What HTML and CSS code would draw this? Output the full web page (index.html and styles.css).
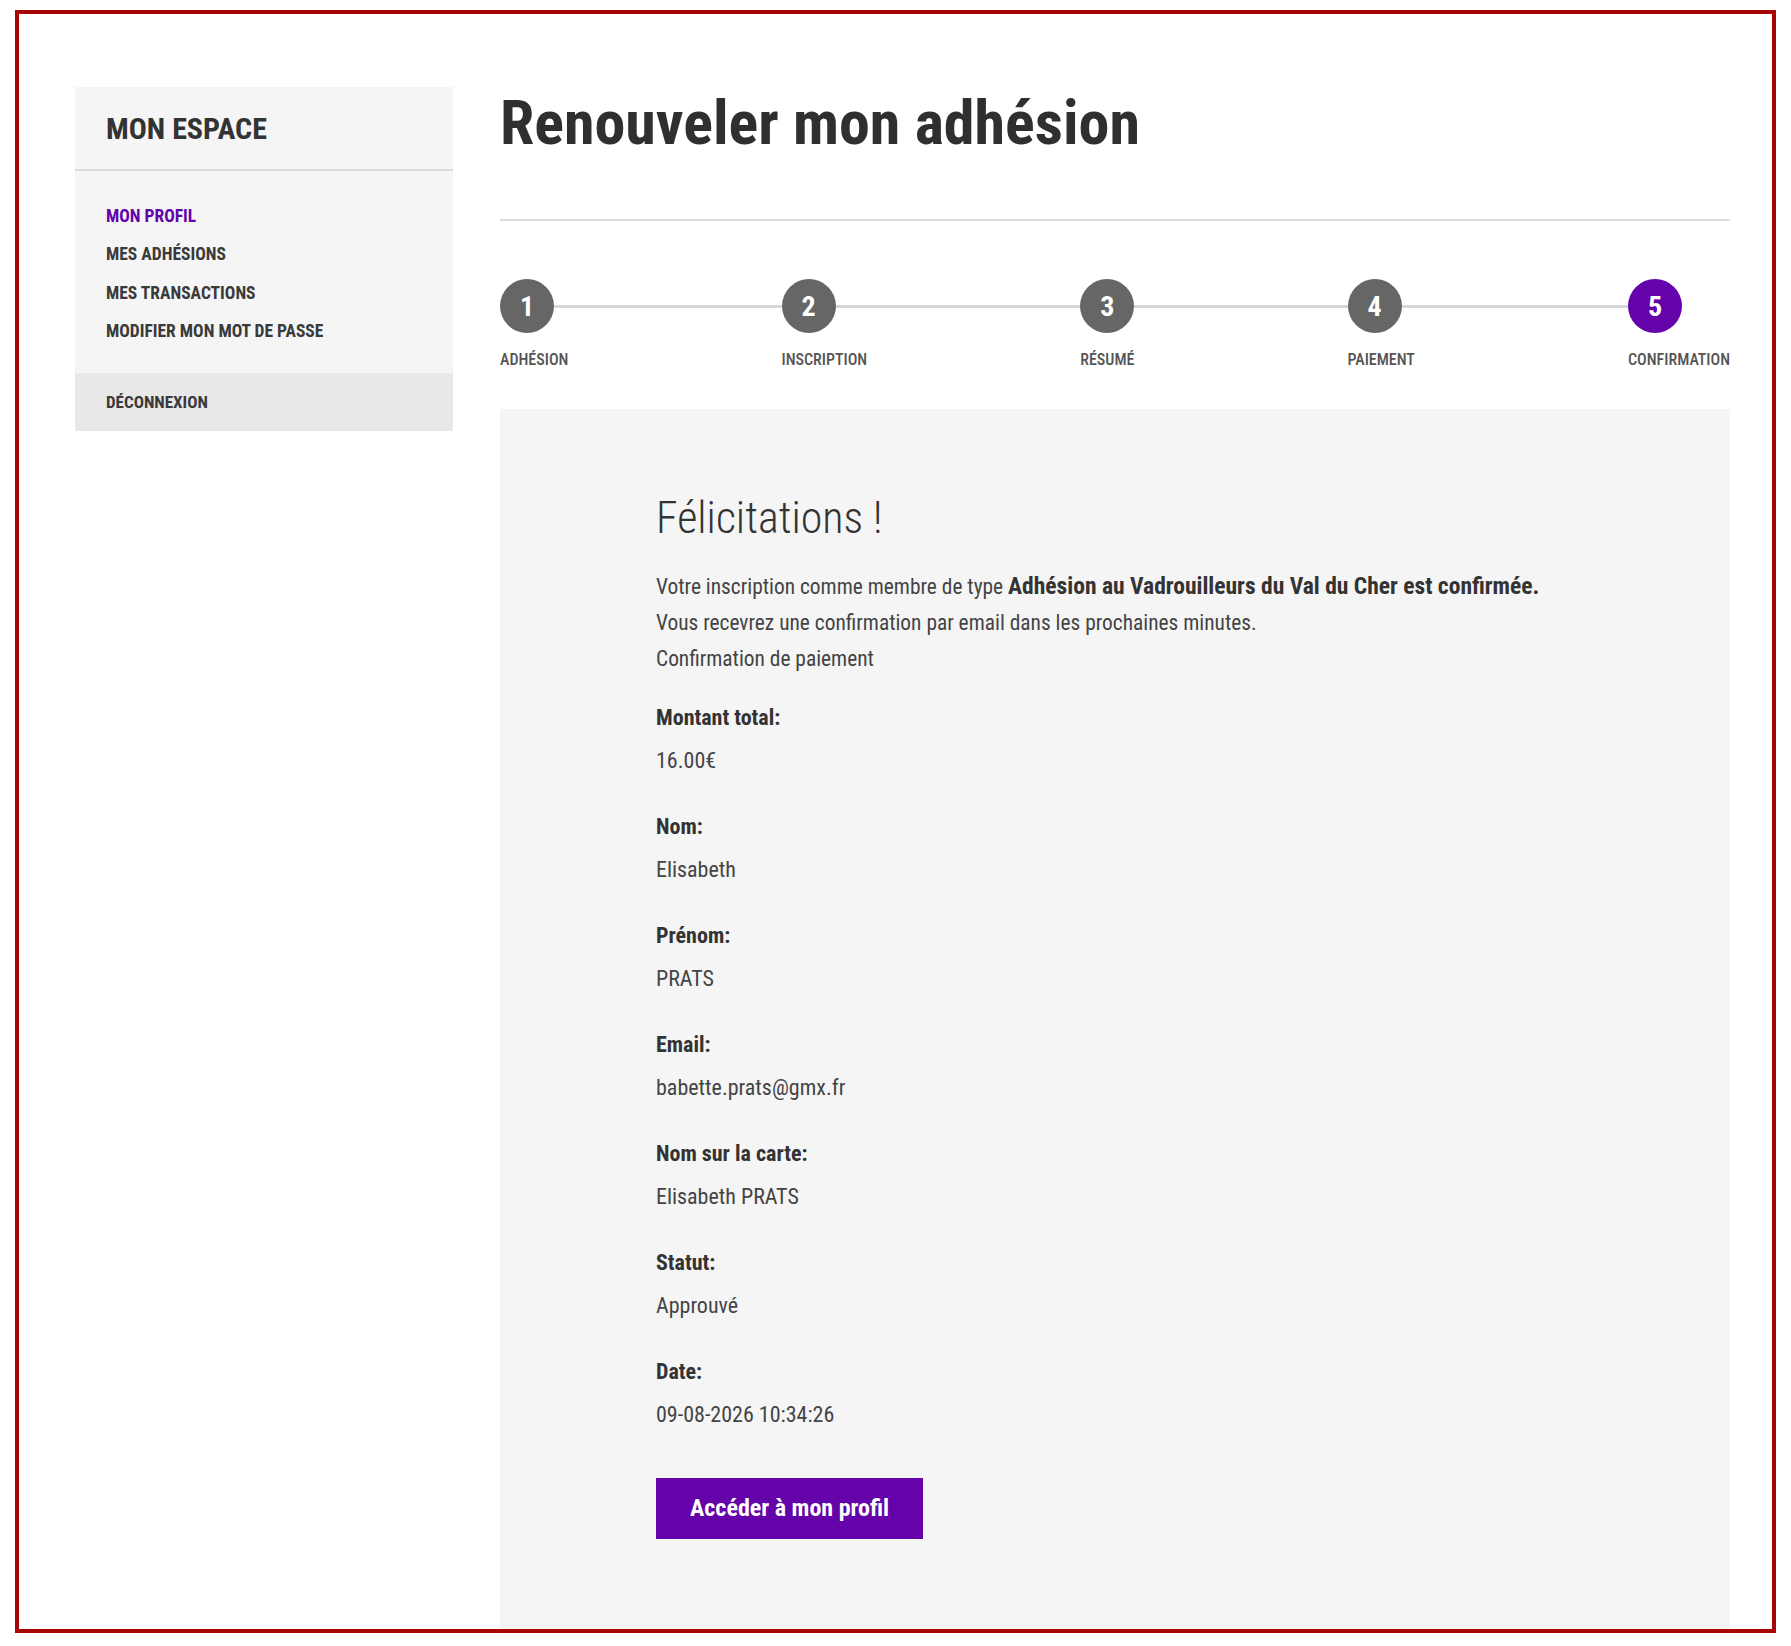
FILE: index.html
```html
<!DOCTYPE html>
<html lang="fr">
<head>
  <meta charset="UTF-8" />
  <meta name="viewport" content="width=device-width, initial-scale=1.0"/>
  <title>Renouveler mon adhésion</title>
  <link rel="stylesheet" href="styles.css">
</head>
<body>

<div class="frame">
  <div class="layout">

    <!-- Menu de l'espace membre -->
    <aside class="sidebar">
      <div class="sidebar-head">
        <h2>Mon espace</h2>
      </div>
      <nav class="sidebar-nav">
        <a href="#" class="active">Mon profil</a>
        <a href="#">Mes adhésions</a>
        <a href="#">Mes transactions</a>
        <a href="#">Modifier mon mot de passe</a>
      </nav>
      <a href="#" class="logout">Déconnexion</a>
    </aside>

    <main class="content">
      <h1>Renouveler mon adhésion</h1>
      <hr class="rule">

      <!-- Etapes du renouvellement -->
      <ol class="steps">
        <li class="step"><span class="step-num">1</span><span class="step-label">Adhésion</span></li>
        <li class="step"><span class="step-num">2</span><span class="step-label">Inscription</span></li>
        <li class="step"><span class="step-num">3</span><span class="step-label">Résumé</span></li>
        <li class="step"><span class="step-num">4</span><span class="step-label">Paiement</span></li>
        <li class="step current"><span class="step-num">5</span><span class="step-label">Confirmation</span></li>
      </ol>

      <section class="panel">
        <h3>Félicitations !</h3>
        <div class="message">
          <p>Votre inscription comme membre de type <strong>Adhésion au Vadrouilleurs du Val du Cher est confirmée.</strong></p>
          <p>Vous recevrez une confirmation par email dans les prochaines minutes.</p>
          <p>Confirmation de paiement</p>
        </div>

        <div class="details">
          <div class="field"><div class="field-label">Montant total:</div><div class="field-value">16.00€</div></div>
          <div class="field"><div class="field-label">Nom:</div><div class="field-value">Elisabeth</div></div>
          <div class="field"><div class="field-label">Prénom:</div><div class="field-value">PRATS</div></div>
          <div class="field"><div class="field-label">Email:</div><div class="field-value">babette.prats@gmx.fr</div></div>
          <div class="field"><div class="field-label">Nom sur la carte:</div><div class="field-value">Elisabeth PRATS</div></div>
          <div class="field"><div class="field-label">Statut:</div><div class="field-value">Approuvé</div></div>
          <div class="field"><div class="field-label">Date:</div><div class="field-value">09-08-2026 10:34:26</div></div>
        </div>

        <a href="#" class="btn">Accéder à mon profil</a>
      </section>
    </main>

  </div>
</div>

</body>
</html>
```
FILE: styles.css
```css
:root {
  --violet: #6303a9;
  --gris-fond: #f5f5f5;
  --gris-ligne: #dddddd;
  --texte: #333;
}

body {
  margin: 0;
  font-family: Roboto, "Open Sans", sans-serif;
  font-stretch: 75%;
  color: var(--texte);
  background: #fff;
}

a {
  text-decoration: none;
  color: inherit;
}

.frame {
  margin: 10px 15px 13px 15px;
  border: 4px solid #a80606;
}

.layout {
  display: flex;
  align-items: flex-start;
  gap: 47px;
  padding: 73px 42px 0 56px;
}

/* ---- sidebar ---- */

.sidebar {
  flex: none;
  width: 378px;
  background: var(--gris-fond);
}

.sidebar-head {
  padding: 22px 31px 20px;
  border-bottom: 2px solid var(--gris-ligne);
}

.sidebar-head h2 {
  margin: 0;
  font-size: 30px;
  line-height: 40px;
  font-weight: 700;
  text-transform: uppercase;
  color: #333;
}

.sidebar-nav {
  display: flex;
  flex-direction: column;
  padding: 26px 31px 22px;
}

.sidebar-nav a,
.logout {
  font-size: 17.5px;
  line-height: 38.4px;
  font-weight: 700;
  text-transform: uppercase;
  color: #3a3a3a;
}

.sidebar-nav a.active {
  color: var(--violet);
}

.logout {
  display: block;
  padding: 10px 31px;
  background: #e8e8e8;
  font-size: 17px;
}

/* ---- contenu ---- */

.content {
  flex: 1;
  min-width: 0;
}

.content h1 {
  margin: 5px 0 0;
  font-size: 62px;
  line-height: 62px;
  font-weight: 700;
  color: #2f2f2f;
}

.rule {
  margin: 65px 0 0;
  border: none;
  border-top: 2px solid var(--gris-ligne);
}

.steps {
  position: relative;
  display: flex;
  justify-content: space-between;
  list-style: none;
  margin: 58px 0 0;
  padding: 0;
}

/* trait qui relie les pastilles */
.steps::before {
  content: "";
  position: absolute;
  top: 26px;
  left: 27px;
  right: 72px;
  height: 3px;
  background: #d6d6d6;
}

.step {
  display: flex;
  flex-direction: column;
  align-items: flex-start;
  gap: 17px;
}

.step-num {
  position: relative;
  display: flex;
  align-items: center;
  justify-content: center;
  width: 54px;
  height: 54px;
  border-radius: 50%;
  background: #666;
  color: #fff;
  font-size: 28px;
  font-weight: 700;
}

.step.current .step-num {
  background: var(--violet);
}

.step-label {
  font-size: 16px;
  line-height: 20px;
  font-weight: 500;
  text-transform: uppercase;
  color: #555;
}

.panel {
  margin-top: 39px;
  padding: 82px 40px 90px 156px;
  background: var(--gris-fond);
}

.panel h3 {
  margin: 0;
  font-size: 44px;
  line-height: 55px;
  font-weight: 300;
  color: #333;
}

.message {
  margin-top: 22px;
}

.message p {
  margin: 0;
  font-size: 21.4px;
  line-height: 36px;
  color: #444;
}

.message strong {
  font-size: 1.1em;
  color: #333;
}

.details {
  display: flex;
  flex-direction: column;
  gap: 31px;
  margin-top: 26px;
}

.field-label {
  font-size: 22px;
  line-height: 30px;
  font-weight: 700;
  color: #333;
}

.field-value {
  margin-top: 8px;
  font-size: 22px;
  line-height: 40px;
  color: #444;
}

.btn {
  display: inline-block;
  margin-top: 43px;
  padding: 0 34px;
  height: 61px;
  line-height: 61px;
  background: var(--violet);
  color: #fff;
  font-size: 24px;
  font-weight: 700;
}
```
